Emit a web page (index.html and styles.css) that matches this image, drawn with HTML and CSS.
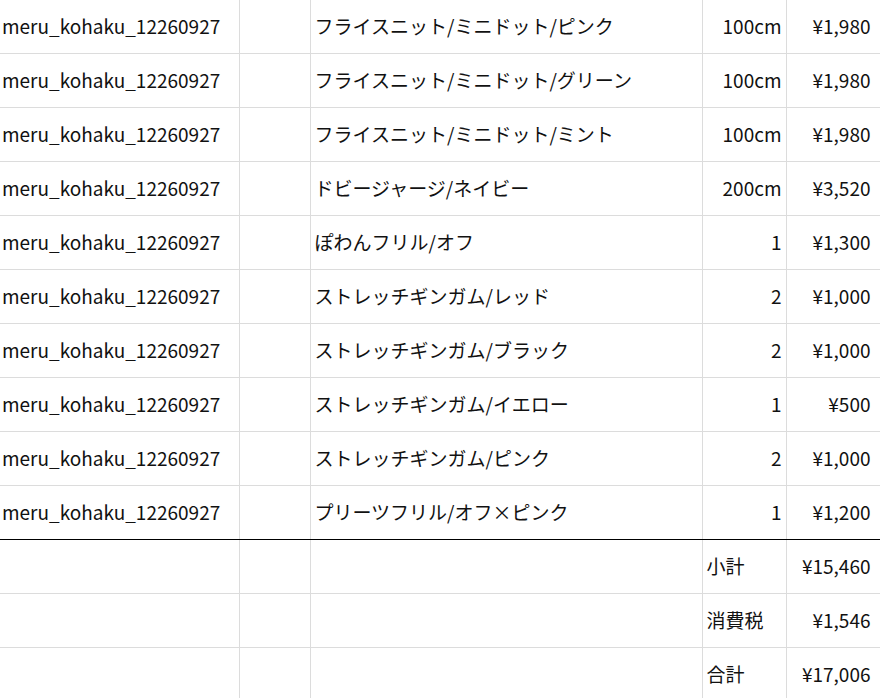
FILE: index.html
```html
<!DOCTYPE html>
<html lang="ja">
<head>
<meta charset="utf-8">
<link rel="stylesheet" href="styles.css">
</head>
<body>
<table class="sheet">
  <colgroup>
    <col class="c-user"><col class="c-blank"><col class="c-item"><col class="c-qty"><col class="c-price">
  </colgroup>
  <tbody>
    <tr><td>meru_kohaku_12260927</td><td></td><td>フライスニット/ミニドット/ピンク</td><td class="num">100cm</td><td class="num">¥1,980</td></tr>
    <tr><td>meru_kohaku_12260927</td><td></td><td>フライスニット/ミニドット/グリーン</td><td class="num">100cm</td><td class="num">¥1,980</td></tr>
    <tr><td>meru_kohaku_12260927</td><td></td><td>フライスニット/ミニドット/ミント</td><td class="num">100cm</td><td class="num">¥1,980</td></tr>
    <tr><td>meru_kohaku_12260927</td><td></td><td>ドビージャージ/ネイビー</td><td class="num">200cm</td><td class="num">¥3,520</td></tr>
    <tr><td>meru_kohaku_12260927</td><td></td><td>ぽわんフリル/オフ</td><td class="num">1</td><td class="num">¥1,300</td></tr>
    <tr><td>meru_kohaku_12260927</td><td></td><td>ストレッチギンガム/レッド</td><td class="num">2</td><td class="num">¥1,000</td></tr>
    <tr><td>meru_kohaku_12260927</td><td></td><td>ストレッチギンガム/ブラック</td><td class="num">2</td><td class="num">¥1,000</td></tr>
    <tr><td>meru_kohaku_12260927</td><td></td><td>ストレッチギンガム/イエロー</td><td class="num">1</td><td class="num">¥500</td></tr>
    <tr><td>meru_kohaku_12260927</td><td></td><td>ストレッチギンガム/ピンク</td><td class="num">2</td><td class="num">¥1,000</td></tr>
    <tr class="last"><td>meru_kohaku_12260927</td><td></td><td>プリーツフリル/オフ×ピンク</td><td class="num">1</td><td class="num">¥1,200</td></tr>
    <tr><td></td><td></td><td></td><td>小計</td><td class="num">¥15,460</td></tr>
    <tr><td></td><td></td><td></td><td>消費税</td><td class="num">¥1,546</td></tr>
    <tr><td></td><td></td><td></td><td>合計</td><td class="num">¥17,006</td></tr>
  </tbody>
</table>
</body>
</html>
```
FILE: styles.css
```css
html, body {
  margin: 0;
  padding: 0;
  background: #fff;
}
body {
  overflow: hidden;
  font-family: "Noto Sans CJK JP", "Noto Sans", sans-serif;
  font-size: 19px;
  color: #111;
}
.sheet {
  border-collapse: collapse;
  table-layout: fixed;
  width: 884px;
  margin-top: -1px;
}
.c-user { width: 239px; }
.c-blank { width: 71px; }
.c-item { width: 392px; }
.c-qty { width: 84px; }
.c-price { width: 98px; }
.sheet td {
  height: 54px;
  padding: 0 4px 2px 4px;
  box-sizing: border-box;
  border: 1px solid #dcdcdc;
  white-space: nowrap;
  overflow: hidden;
  vertical-align: middle;
  line-height: 24px;
}
.sheet td:first-child {
  border-left: none;
  padding-left: 2px;
}
.sheet td:last-child {
  padding-right: 13px;
}
.sheet td.num {
  text-align: right;
}
.sheet tr.last td {
  border-bottom: 1px solid #000;
}
```
